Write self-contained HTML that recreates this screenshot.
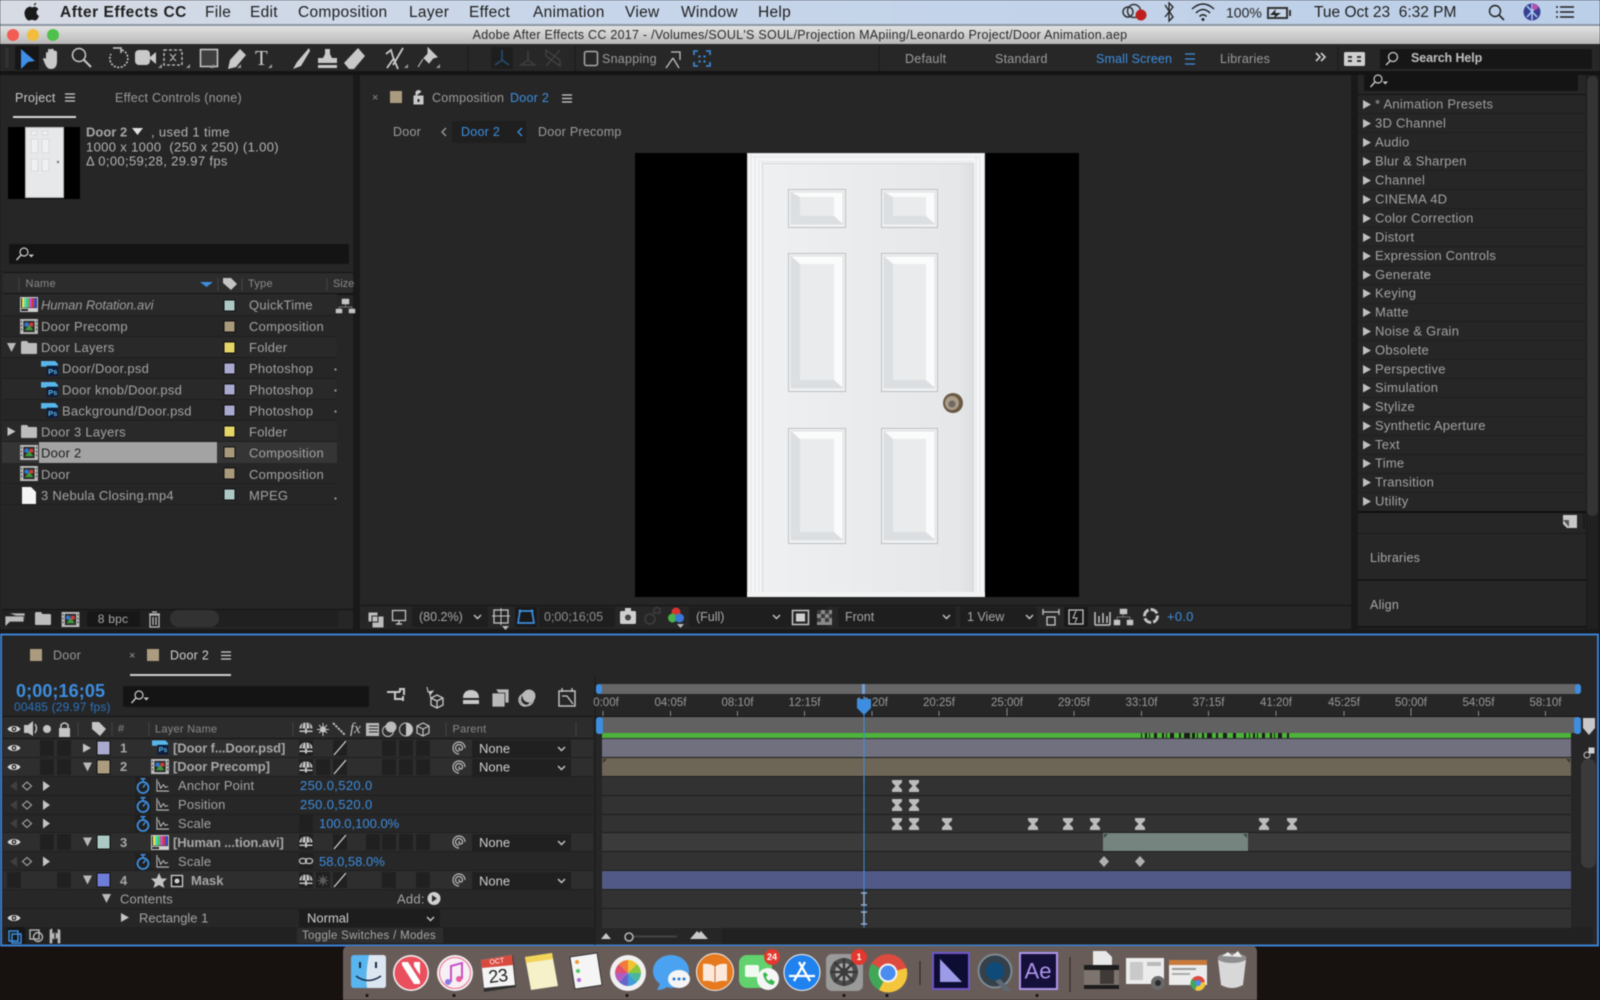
<!DOCTYPE html>
<html lang="en"><head><meta charset="utf-8"><title>After Effects CC</title>
<style>
html,body{margin:0;padding:0;width:1600px;height:1000px;overflow:hidden;background:#15100e}
svg{display:block;position:absolute;left:0;top:0;filter:blur(.5px)}
text{font-family:"Liberation Sans",sans-serif;font-size:13px;fill:#a4a4a4;dominant-baseline:central;letter-spacing:.25px;white-space:pre}
.m{font-size:15.5px;fill:#1e1e1e;letter-spacing:.3px}
.b{font-weight:bold}
.w{fill:#1f2022}
.u{fill:#3d8ee0}
.d{fill:#8f8f8f}
.h{font-size:11px;fill:#8a8a8a}
.l{fill:#b4b4b4;font-weight:bold;letter-spacing:0}
.n{fill:#cfcfcf}
.g{fill:#c4c4c4}
.i{fill:#c9c9c9}
.s{stroke:#c9c9c9;fill:none;stroke-width:1.4}
.t{font-size:11.5px;fill:#9a9a9a;text-anchor:middle;letter-spacing:0}
</style></head>
<body>
<svg width="1600" height="1000" viewBox="0 0 1600 1000" xmlns="http://www.w3.org/2000/svg">
<defs>
<linearGradient id="mb" x1="0" x2="1"><stop offset="0" stop-color="#d7dbe4"/><stop offset=".35" stop-color="#c8d6ea"/><stop offset="1" stop-color="#bccfe8"/></linearGradient>
<linearGradient id="tb" x1="0" y1="0" x2="0" y2="1"><stop offset="0" stop-color="#e2e2e2"/><stop offset="1" stop-color="#b9b9b9"/></linearGradient>
<linearGradient id="dr" x1="0" x2="1"><stop offset="0" stop-color="#eef0f1"/><stop offset=".5" stop-color="#e9ebec"/><stop offset=".93" stop-color="#e5e7e9"/><stop offset="1" stop-color="#dcdfe1"/></linearGradient>
<symbol id="eye" viewBox="0 0 14 10" overflow="visible"><path d="M0.5 5C3 1 11 1 13.5 5C11 9 3 9 .5 5Z" fill="#d5d5d5"/><circle cx="7" cy="5" r="2.4" fill="#262626"/><circle cx="7" cy="5" r="1.1" fill="#d5d5d5"/></symbol>
<symbol id="comp" viewBox="0 0 19 16" overflow="visible"><rect width="19" height="16" fill="#bdbdbd"/><rect x="3.5" y="2" width="12" height="12" fill="#2a2a2a"/><path d="M5 12L10 6L14 12Z" fill="#3c9a3a"/><circle cx="7" cy="6" r="2.4" fill="#2f77d5"/><rect x="10" y="4" width="4" height="4" fill="#d23c34"/><path d="M1 2h1v2H1zM1 6h1v2H1zM1 10h1v2H1zM17 2h1v2h-1zM17 6h1v2h-1zM17 10h1v2h-1z" fill="#333"/></symbol>
<symbol id="ps" viewBox="0 0 18 16" overflow="visible"><path d="M0 0H15L18 3V6H0Z" fill="#58b7ea"/><rect x="6" y="5" width="12" height="11" fill="#0e1c3a"/><text x="7.5" y="11" style="font-size:8px;fill:#58b7ea;font-weight:bold;letter-spacing:0">Ps</text></symbol>
<symbol id="tv" viewBox="0 0 18 15" overflow="visible"><rect width="18" height="15" fill="#d0d0d0"/><rect x="1" y="1" width="16" height="10" fill="#222"/><rect x="2" y="1" width="2.4" height="9.5" fill="#e8e84a"/><rect x="4.4" y="1" width="2.4" height="9.5" fill="#4ad8d8"/><rect x="6.8" y="1" width="2.4" height="9.5" fill="#4ad04a"/><rect x="9.2" y="1" width="2.4" height="9.5" fill="#d84ad8"/><rect x="11.6" y="1" width="2.4" height="9.5" fill="#d83a3a"/><rect x="14" y="1" width="2.4" height="9.5" fill="#3a4ad8"/><rect x="1" y="12" width="7" height="2" fill="#222"/></symbol>
<symbol id="folder" viewBox="0 0 16 13" overflow="visible"><path d="M0 1.5Q0 0 1.5 0H6L7.5 2H15Q16 2 16 3V12Q16 13 15 13H1Q0 13 0 12Z" fill="#bdbdbd"/></symbol>
<symbol id="shy" viewBox="0 0 14 12" overflow="visible"><path d="M.5 6.5C.5 2.5 3.5 .5 7 .5S13.5 2.5 13.5 6.5H8V8.5H13.5V10H8V11.5H6V10H.5V8.5H6V6.5Z" fill="#c4c4c4"/><path d="M7 .5V6.5M4 1.5Q3 4 3 6.500M10 1.5Q11 4 11 6.500" stroke="#2a2a2a" stroke-width=".9" fill="none"/></symbol>
<symbol id="sp" viewBox="0 0 14 14" overflow="visible"><path d="M7 13A6 6 0 1 1 13 7M7 10.500A3.500 3.500 0 1 1 10.500 7C10.500 8.500 9.500 9 8.500 9C7.500 9 7 8.300 7 7.500C7 6.800 7.400 6.500 7.800 6.500" fill="none" stroke="#bdbdbd" stroke-width="1.200"/></symbol>
<symbol id="sw" viewBox="0 0 14 16" overflow="visible"><circle cx="7" cy="9.500" r="5.500" fill="none" stroke="#3d8ee0" stroke-width="1.800"/><path d="M7 9.500L9.500 6M4.500 .8H9.500M7 .8V3.500" stroke="#3d8ee0" stroke-width="1.500" fill="none"/></symbol>
<symbol id="gr" viewBox="0 0 14 14" overflow="visible"><path d="M1 0V13H14" fill="none" stroke="#bdbdbd" stroke-width="1.100"/><path d="M2.500 3L5 10L8 6L10 9L13 8" fill="none" stroke="#bdbdbd" stroke-width="1.100"/></symbol>
<symbol id="hg" viewBox="0 0 10 12" overflow="visible"><path d="M0 0H10V2.500L6.500 6L10 9.500V12H0V9.500L3.500 6L0 2.500Z" fill="#bcbcbc"/></symbol>
<symbol id="chev" viewBox="0 0 9 6" overflow="visible"><path d="M1 1L4.500 4.500L8 1" fill="none" stroke="#c8c8c8" stroke-width="1.400"/></symbol>
<symbol id="sr" viewBox="0 0 20 14" overflow="visible"><circle cx="9" cy="5" r="4" fill="none" stroke="#c9c9c9" stroke-width="1.200"/><path d="M6 8L1.500 13" stroke="#c9c9c9" stroke-width="1.400"/><path d="M13.500 7.500H19L16.250 10.500Z" fill="#c9c9c9"/></symbol>
<symbol id="rarr" viewBox="0 0 8 9" overflow="visible"><path d="M0 0L8 4.500L0 9Z" fill="#c4c4c4"/></symbol>
<symbol id="darr" viewBox="0 0 9 9" overflow="visible"><path d="M0 0H9L4.500 9Z" fill="#b9b9b9"/></symbol>
<symbol id="menu" viewBox="0 0 10 9" overflow="visible"><path d="M0 1H10M0 4.500H10M0 8H10" stroke="#cfcfcf" stroke-width="1.300"/></symbol>
<symbol id="kn" viewBox="0 0 40 12" overflow="visible"><path d="M0 6L7 1V11Z" fill="#3f3f3f"/><path d="M17 2L21.500 6L17 10L12.500 6Z" fill="none" stroke="#a8a8a8" stroke-width="1.100"/><path d="M33 1L40 6L33 11Z" fill="#c4c4c4"/></symbol>
</defs>

<!-- desktop -->
<rect width="1600" height="1000" fill="#17110f"/>
<!-- menu bar -->
<rect width="1600" height="24" fill="url(#mb)"/>
<rect y="24" width="1600" height="2" fill="#8d97a6"/>
<path d="M36 2.800C34.800 3 33.800 4.200 34 5.500C35.300 5.500 36.200 4.200 36 2.800ZM30.500 6.600C27.500 6.600 24.500 9.500 24.500 13.200C24.500 16.500 27 20.500 29 20.500C30 20.500 30.700 19.800 32 19.800C33.300 19.800 33.900 20.500 35 20.500C36.800 20.500 38.500 17.800 38.900 15.900C37.300 15.200 36.500 13.900 36.500 12.500C36.500 11 37.300 9.900 38.400 9.200C37.400 7.600 35.900 6.800 34.500 6.800C33.300 6.800 32.600 7.500 31.900 7.500C31.400 7.500 31.300 6.600 30.500 6.600Z" fill="#1a1a1a"/>
<text class="m b" x="60" y="12.500" style="letter-spacing:.5px">After Effects CC</text>
<text class="m" x="205" y="12.500">File</text>
<text class="m" x="250" y="12.500">Edit</text>
<text class="m" x="298" y="12.500">Composition</text>
<text class="m" x="409" y="12.500">Layer</text>
<text class="m" x="469" y="12.500">Effect</text>
<text class="m" x="533" y="12.500">Animation</text>
<text class="m" x="625" y="12.500">View</text>
<text class="m" x="681" y="12.500">Window</text>
<text class="m" x="758" y="12.500">Help</text>
<!-- status -->
<circle cx="1134" cy="11" r="6.500" fill="none" stroke="#333" stroke-width="1.500"/><circle cx="1128" cy="12" r="5" fill="none" stroke="#333" stroke-width="1.500"/><circle cx="1141" cy="15" r="5.500" fill="#c01f1f"/>
<path d="M1165 5L1173 17L1169 21V3L1173 7L1165 17" fill="none" stroke="#222" stroke-width="1.300"/>
<path d="M1192 9Q1203 -1 1214 9M1196 13Q1203 6 1210 13M1199.500 16.500Q1203 13 1206.500 16.500" fill="none" stroke="#222" stroke-width="1.500"/><circle cx="1203" cy="19.500" r="1.500" fill="#222"/>
<text x="1226" y="12.500" style="font-size:14px;fill:#222;letter-spacing:0">100%</text>
<rect x="1267" y="7" width="21" height="12" fill="#333"/><rect x="1269" y="9" width="17" height="8" fill="#c8d6ea"/><path d="M1270 15L1276 9L1275 13H1281L1274 18L1275 15Z" fill="#222"/><rect x="1289" y="10" width="2" height="6" fill="#333"/>
<text class="m" x="1314" y="12.500" style="letter-spacing:0">Tue Oct 23  6:32 PM</text>
<circle cx="1495" cy="11" r="5.500" fill="none" stroke="#222" stroke-width="1.400"/><path d="M1499 15L1504 20" stroke="#222" stroke-width="1.600"/>
<circle cx="1532" cy="12" r="8.500" fill="#3a3f92"/><path d="M1527 6L1537 17M1537 6L1527 17M1532 4V20" stroke="#a9d0f5" stroke-width="1.500"/><circle cx="1535" cy="7" r="3" fill="#c04cb0"/>
<path d="M1560 7H1574M1560 12H1574M1560 17H1574" stroke="#222" stroke-width="1.500"/><circle cx="1557" cy="7" r="1" fill="#222"/><circle cx="1557" cy="12" r="1" fill="#222"/><circle cx="1557" cy="17" r="1" fill="#222"/>

<!-- title bar -->
<rect y="26" width="1600" height="18" fill="url(#tb)"/>
<circle cx="13" cy="35" r="6" fill="#f25c52"/><circle cx="33" cy="35" r="6" fill="#f2bd3d"/><circle cx="53" cy="35" r="6" fill="#4fc04b"/>
<text x="800" y="35" style="font-size:12.500px;fill:#2a2a2a;text-anchor:middle;letter-spacing:.26px">Adobe After Effects CC 2017 - /Volumes/SOUL'S SOUL/Projection MApiing/Leonardo Project/Door Animation.aep</text>

<!-- toolbar -->
<rect y="44" width="1600" height="27" fill="#272727"/>
<rect y="71" width="1600" height="4" fill="#141414"/>
<path d="M7 48V68" stroke="#3b3b3b" stroke-width="3" stroke-dasharray="1.500 1"/>
<rect x="15" y="46" width="24" height="24" rx="2" fill="#161616"/>
<path d="M21 49L35 61L28 62L21 69Z" fill="#3f8ee8"/>
<path d="M46 58V53Q47 51 48 53V58V49.500Q50 48 51 50V57V49Q53 48 54 50V57V51Q56 50 57 52V61Q57 69 51 69Q47 69 45 64L43 59Q44 57 46 59Z" fill="#c9c9c9"/>
<circle cx="79" cy="55" r="6.500" fill="none" stroke="#c9c9c9" stroke-width="1.500"/><path d="M84 60L91 67" stroke="#c9c9c9" stroke-width="2"/>
<path d="M122 50A9 9 0 1 1 111 54" fill="none" stroke="#c9c9c9" stroke-width="1.600" stroke-dasharray="2 1.500"/><path d="M113 48H121V53" fill="none" stroke="#c9c9c9" stroke-width="1.500"/>
<rect x="135" y="50" width="15" height="15" rx="4" fill="#c9c9c9"/><path d="M150 57L156 52V64L150 59Z" fill="#c9c9c9"/>
<rect x="164" y="50" width="18" height="15" fill="none" stroke="#c9c9c9" stroke-dasharray="3 2" stroke-width="1.300"/><path d="M170 54L173 57L176 54M170 61L173 58L176 61" fill="none" stroke="#c9c9c9"/>
<rect x="200.500" y="49.500" width="17" height="17" fill="#3f3f3f" stroke="#c9c9c9" stroke-width="1.500"/>
<path d="M240 49L246 55L236 67L228 69L230 60Z" fill="#c9c9c9"/>
<text x="255" y="58" style="font-family:'Liberation Serif',serif;font-size:21px;fill:#c9c9c9;letter-spacing:0">T</text>
<path d="M309 48L297 62L293 69L301 66L310 51Z" fill="#c9c9c9"/>
<path d="M325 49h5v5l2 4h5v5h-19v-5h5l2-4zM318 65h19v3h-19z" fill="#c9c9c9"/>
<path d="M358 48L365 56L354 69H349L344 63Z" fill="#c9c9c9"/>
<path d="M386 54L391 50L393 57L398 69M394 58L387 68M403 48L393 65" fill="none" stroke="#c9c9c9" stroke-width="1.800"/>
<path d="M428 48L437 57L433 58L429 63L424 58L428 54ZM423 59L418 67" fill="#c9c9c9" stroke="#c9c9c9"/>
<path d="M210 68h4v-4zM237 68h4v-4zM268 68h4v-4zM158 68h4v-4zM186 68h4v-4zM404 68h4v-4zM436 68h4v-4z" fill="#999"/>
<path d="M468 46V71" stroke="#1a1a1a"/>
<rect x="491" y="47" width="22" height="22" rx="2" fill="#1e1e1e"/>
<path d="M502 50V60L495 65M502 60L509 65" fill="none" stroke="#264767" stroke-width="1.800"/>
<path d="M528 51V60L521 65H535L528 60" fill="none" stroke="#424242" stroke-width="1.300"/>
<path d="M546 50L560 60V66L546 56ZM546 56V50M560 50L546 66" fill="none" stroke="#424242" stroke-width="1.300"/>
<path d="M575 46V71" stroke="#1a1a1a"/>
<rect x="584.500" y="51.500" width="13" height="14" rx="2" fill="none" stroke="#a8a8a8" stroke-width="1.500"/>
<text x="602" y="59" style="font-size:12.500px;fill:#9c9c9c">Snapping</text>
<path d="M666 68L673 58M679 68L673 58M671 52H680V60" fill="none" stroke="#c0c0c0" stroke-width="1.300"/>
<path d="M694 55V51H698M706 51H710V55M694 62V66H698M706 66H710V62" fill="none" stroke="#3d8ee0" stroke-width="1.600"/><path d="M699 56h1v1h-1zM704 56h1v1h-1zM699 61h1v1h-1zM704 61h1v1h-1z" fill="#3d8ee0" stroke="#3d8ee0"/>
<path d="M879 46V71M1338 46V71" stroke="#1a1a1a"/>
<text class="d" x="905" y="59" style="font-size:12.500px;fill:#9c9c9c">Default</text>
<text x="995" y="59" style="font-size:12.500px;fill:#9c9c9c">Standard</text>
<text x="1096" y="59" style="font-size:12.500px;fill:#3d8ee0;letter-spacing:.15px">Small Screen</text>
<path d="M1185 54H1195M1185 59H1195M1185 64H1195" stroke="#3d8ee0" stroke-width="1.300"/>
<text x="1220" y="59" style="font-size:12.500px;fill:#9c9c9c">Libraries</text>
<path d="M1316 53L1320 57L1316 61M1321 53L1325 57L1321 61" fill="none" stroke="#d0d0d0" stroke-width="1.600"/>
<rect x="1344" y="52" width="21" height="14" rx="1.500" fill="#d0d0d0"/><path d="M1348 56h4v2h-4zM1348 60h4v2h-4zM1357 56h4v2h-4zM1357 60h4v2h-4z" fill="#333"/>
<rect x="1380" y="49" width="212" height="20" rx="2" fill="#161616"/>
<circle cx="1393" cy="57" r="4.500" fill="none" stroke="#c9c9c9" stroke-width="1.300"/><path d="M1390 61L1386 65" stroke="#c9c9c9" stroke-width="1.400"/>
<text x="1411" y="58" style="font-size:12.500px;fill:#c0c0c0;font-weight:bold;letter-spacing:-.1px">Search Help</text>

<!-- panel backdrop -->
<rect y="75" width="1600" height="559" fill="#191919"/>
<rect x="0" y="75" width="353" height="554" fill="#262626"/>
<rect x="360" y="75" width="991" height="554" fill="#262626"/>
<rect x="1358" y="75" width="228" height="554" fill="#262626"/>
<rect x="1587" y="75" width="11" height="554" fill="#202020"/>

<!-- project panel -->
<text x="15" y="98" style="fill:#c9c9c9;font-size:12.500px">Project</text>
<use href="#menu" x="65" y="93" width="10" height="9"/>
<rect x="13" y="116" width="63" height="2" fill="#d8d8d8"/>
<text x="115" y="98" style="fill:#9a9a9a;font-size:12.500px">Effect Controls (none)</text>
<rect x="8" y="127" width="72" height="72" fill="#000"/>
<rect x="25" y="127" width="39" height="71" fill="#e6e8ea"/>
<rect x="25.500" y="127.500" width="38" height="70" fill="none" stroke="#bbb"/>
<path d="M31 131h6v4h-6zM42 131h6v4h-6zM31 139h7v14h-7zM42 139h7v14h-7zM31 159h7v12h-7zM42 159h7v12h-7z" fill="#eef0f1" stroke="#d3d6d8" stroke-width=".8"/>
<circle cx="58" cy="162" r="1.200" fill="#777"/>
<text class="l" x="86" y="132" style="font-weight:bold;fill:#a8a8a8">Door 2</text>
<path d="M132 128H143L137.500 135Z" fill="#e0e0e0"/>
<text x="147" y="132" style="fill:#b4b4b4;letter-spacing:.35px"> , used 1 time</text>
<text x="86" y="147" style="fill:#b4b4b4;letter-spacing:.35px">1000 x 1000  (250 x 250) (1.00)</text>
<text x="86" y="161" style="fill:#b4b4b4;letter-spacing:.35px">Δ 0;00;59;28, 29.97 fps</text>
<rect x="9" y="244" width="340" height="20" rx="2" fill="#141414"/>
<use href="#sr" x="15" y="247" width="20" height="14"/>
<rect x="3" y="273" width="350" height="21" fill="#2c2c2c"/>
<rect x="3" y="272" width="350" height="1" fill="#141414"/>
<rect x="3" y="293" width="350" height="2" fill="#141414"/>
<path d="M19 278V291M218 278V291M242 278V291M327 278V291" stroke="#444"/>
<text class="h" x="25.500" y="284">Name</text>
<path d="M200 282H213L206.500 287Z" fill="#3d8ee0"/>
<path d="M223 278H231L237 284L231 290L223 283Z" fill="#c4c4c4"/>
<text class="h" x="248" y="284">Type</text>
<text class="h" x="333" y="284" style="letter-spacing:0">Size</text>
<!-- project rows -->
<rect x="2" y="294" width="335" height="21" fill="#292929"/>
<rect x="2" y="336" width="335" height="21" fill="#292929"/>
<rect x="2" y="378" width="335" height="21" fill="#292929"/>
<rect x="2" y="420" width="335" height="21" fill="#292929"/>
<path d="M2 315.500H337M2 336.500H337M2 357.500H337M2 378.500H337M2 399.500H337M2 420.500H337M2 441.500H337M2 462.500H337M2 483.500H337M2 504.500H337" stroke="#1f1f1f"/>
<rect x="2" y="442" width="335" height="21" fill="#353535"/>
<rect x="39" y="442" width="178" height="21" fill="#a3a3a3"/>
<use href="#tv" x="20" y="297" width="18" height="15"/>
<use href="#comp" x="20" y="319" width="18" height="15"/>
<use href="#darr" x="7" y="343" width="9" height="9"/>
<use href="#folder" x="21" y="341" width="16" height="13"/>
<use href="#ps" x="41" y="361" width="17" height="15"/>
<use href="#ps" x="41" y="382" width="17" height="15"/>
<use href="#ps" x="41" y="403" width="17" height="15"/>
<use href="#rarr" x="7" y="427" width="9" height="9"/>
<use href="#folder" x="21" y="425" width="16" height="13"/>
<use href="#comp" x="20" y="445" width="18" height="15"/>
<use href="#comp" x="20" y="466" width="18" height="15"/>
<path d="M22 487H31L36 492V504H22Z" fill="#f5f5f5"/>
<text x="41" y="305" style="font-style:italic;fill:#9e9e9e;letter-spacing:-.1px">Human Rotation.avi</text>
<text x="41" y="326.500">Door Precomp</text>
<text x="41" y="347.500">Door Layers</text>
<text x="62" y="368.500">Door/Door.psd</text>
<text x="62" y="390">Door knob/Door.psd</text>
<text x="62" y="411">Background/Door.psd</text>
<text x="41" y="432">Door 3 Layers</text>
<text x="41" y="453" style="fill:#1d1d1d">Door 2</text>
<text x="41" y="474.500">Door</text>
<text x="41" y="495.500">3 Nebula Closing.mp4</text>
<g stroke="#101010" stroke-width="1">
<rect x="224" y="300" width="11" height="11" fill="#acc9c6"/>
<rect x="224" y="321" width="11" height="11" fill="#a99a7c"/>
<rect x="224" y="342" width="11" height="11" fill="#e3d667"/>
<rect x="224" y="363" width="11" height="11" fill="#aaa9cf"/>
<rect x="224" y="384" width="11" height="11" fill="#aaa9cf"/>
<rect x="224" y="405" width="11" height="11" fill="#aaa9cf"/>
<rect x="224" y="426" width="11" height="11" fill="#e3d667"/>
<rect x="224" y="447" width="11" height="11" fill="#a99a7c"/>
<rect x="224" y="468" width="11" height="11" fill="#a99a7c"/>
<rect x="224" y="489" width="11" height="11" fill="#acc9c6"/>
</g>
<text x="249" y="305">QuickTime</text>
<text x="249" y="326.500">Composition</text>
<text x="249" y="347.500">Folder</text>
<text x="249" y="368.500">Photoshop</text>
<text x="249" y="390">Photoshop</text>
<text x="249" y="411">Photoshop</text>
<text x="249" y="432">Folder</text>
<text x="249" y="453">Composition</text>
<text x="249" y="474.500">Composition</text>
<text x="249" y="495.500">MPEG</text>
<path d="M342 299h7v5h-7zM345.500 304V307M339 307H352M339 307V309M352 307V309M336 309h6v4h-6zM349 309h6v4h-6z" fill="#c4c4c4" stroke="#c4c4c4" stroke-width=".5"/>
<path d="M335 369h1v1h-1zM335 390h1v1h-1zM335 411h1v1h-1zM335 498h1v1h-1z" fill="#999" stroke="#999"/>
<!-- project footer -->
<rect x="2" y="609" width="353" height="1" fill="#141414"/>
<rect x="2" y="610" width="336" height="17" fill="#202020"/>
<path d="M5 616H24V622H10L5 627ZM9 613H25V619" fill="#bbb" stroke="#262626" stroke-width=".8"/>
<use href="#folder" x="35" y="612" width="16" height="13"/>
<use href="#comp" x="61" y="612" width="19" height="15"/>
<rect x="87" y="611" width="53" height="16" rx="2" fill="#171717"/>
<text x="113" y="619" style="text-anchor:middle;font-size:12px;fill:#a8a8a8">8 bpc</text>
<path d="M149 614H160M152 612H157M150 615H159V627H150ZM153 617V625M156 617V625" fill="none" stroke="#bbb" stroke-width="1.300"/>
<rect x="170" y="610" width="49" height="17" rx="8.500" fill="#323232"/>

<!-- comp panel -->
<text x="372" y="98" style="font-size:11px;fill:#8f8f8f">×</text>
<rect x="390" y="91" width="12" height="12" fill="#ab9c7f"/>
<path d="M414 96H423V104H414ZM416 96V92Q418.500 89 421 92" fill="#c9c9c9" stroke="#c9c9c9" stroke-width="1"/><rect x="417.500" y="99" width="2" height="3" fill="#262626"/>
<text x="432" y="98" style="fill:#9c9c9c;font-size:12.500px">Composition</text>
<text x="510" y="98" style="fill:#3d8ee0;font-size:12.500px">Door 2</text>
<use href="#menu" x="562" y="94" width="10" height="9"/>
<text x="393" y="132" style="fill:#9c9c9c;font-size:12.500px">Door</text>
<path d="M446 128L442 132L446 136" fill="none" stroke="#9c9c9c" stroke-width="1.300"/>
<rect x="452" y="121" width="74" height="22" fill="#1f1f1f"/>
<text x="461" y="132" style="fill:#3d8ee0;font-size:12.500px">Door 2</text>
<path d="M522 128L518 132L522 136" fill="none" stroke="#3d8ee0" stroke-width="1.300"/>
<text x="538" y="132" style="fill:#9c9c9c;font-size:12.500px">Door Precomp</text>
<rect x="635" y="153" width="444" height="444" fill="#000"/>
<!-- door -->
<rect x="747" y="153" width="238" height="444" fill="#f5f6f7"/>
<path d="M751 153V597M755 156V597M759 159V597M980 159V597M976 156V597" stroke="#e0e2e4" stroke-width=".8"/>
<path d="M747.500 153V597M984.500 153V597" stroke="#cfd2d4"/>
<path d="M747 153.500H985M751 157H981M759 161.500H973" stroke="#dcdfe1" stroke-width=".8"/>
<rect x="763" y="164" width="210" height="428" fill="url(#dr)"/>
<rect x="762.500" y="163.500" width="211" height="429" fill="none" stroke="#d3d6d8"/>
<rect x="747" y="592" width="238" height="5" fill="#f2f3f4"/>
<g>
<rect x="788.500" y="189.500" width="57" height="38" fill="#f0f1f2" stroke="#bcc0c2"/><rect x="791" y="192" width="52" height="32" fill="#fafbfb" stroke="#cfd2d4" stroke-width=".6"/><path d="M791 192L800 197V216H834L843 224H791Z" fill="#dcdfe1"/><rect x="800" y="197" width="34" height="19" fill="#e9ebec"/>
<rect x="881.500" y="189.500" width="56" height="38" fill="#f0f1f2" stroke="#bcc0c2"/><rect x="884" y="192" width="51" height="32" fill="#fafbfb" stroke="#cfd2d4" stroke-width=".6"/><path d="M884 192L893 197V216H926L935 224H884Z" fill="#dcdfe1"/><rect x="893" y="197" width="33" height="19" fill="#e9ebec"/>
<rect x="788.500" y="253.500" width="57" height="138" fill="#f0f1f2" stroke="#bcc0c2"/><rect x="791" y="256" width="52" height="132" fill="#fafbfb" stroke="#cfd2d4" stroke-width=".6"/><path d="M791 256L800 264V380H834L843 388H791Z" fill="#dcdfe1"/><rect x="800" y="264" width="34" height="116" fill="#e9ebec"/>
<rect x="881.500" y="253.500" width="56" height="138" fill="#f0f1f2" stroke="#bcc0c2"/><rect x="884" y="256" width="51" height="132" fill="#fafbfb" stroke="#cfd2d4" stroke-width=".6"/><path d="M884 256L893 264V380H926L935 388H884Z" fill="#dcdfe1"/><rect x="893" y="264" width="33" height="116" fill="#e9ebec"/>
<rect x="788.500" y="428.500" width="57" height="115" fill="#f0f1f2" stroke="#bcc0c2"/><rect x="791" y="431" width="52" height="109" fill="#fafbfb" stroke="#cfd2d4" stroke-width=".6"/><path d="M791 431L800 439V532H834L843 540H791Z" fill="#dcdfe1"/><rect x="800" y="439" width="34" height="93" fill="#e9ebec"/>
<rect x="881.500" y="428.500" width="56" height="115" fill="#f0f1f2" stroke="#bcc0c2"/><rect x="884" y="431" width="51" height="109" fill="#fafbfb" stroke="#cfd2d4" stroke-width=".6"/><path d="M884 431L893 439V532H926L935 540H884Z" fill="#dcdfe1"/><rect x="893" y="439" width="33" height="93" fill="#e9ebec"/>
</g>
<circle cx="953" cy="403" r="10" fill="#6a5a44"/><circle cx="952" cy="403" r="7" fill="#a99c88"/><circle cx="952" cy="404" r="3.500" fill="#6e6a60"/>
<!-- comp footer -->
<rect x="360" y="605" width="991" height="1" fill="#141414"/>
<path d="M368 612H378V622H368ZM372 616H384V628H372Z" fill="#bdbdbd" stroke="#262626"/>
<rect x="392.500" y="610.500" width="13" height="10" fill="#262626" stroke="#c4c4c4" stroke-width="1.300"/><path d="M396 624H402M399 621V624" stroke="#c4c4c4" stroke-width="1.400"/>
<rect x="412" y="607" width="76" height="20" rx="2" fill="#1e1e1e"/>
<text x="419" y="617" style="font-size:12.500px;fill:#a8a8a8;letter-spacing:0">(80.2%)</text>
<use href="#chev" x="473" y="614" width="9" height="6"/>
<rect x="494" y="610" width="14" height="13" fill="none" stroke="#c4c4c4" stroke-width="1.300"/><path d="M501 608V625M492 616H510" stroke="#c4c4c4"/><path d="M502 626H509L505.500 630Z" fill="#bbb"/>
<rect x="515" y="607" width="22" height="20" rx="2" fill="#191919"/>
<path d="M520 611H532L534 623H518Z" fill="none" stroke="#3d8ee0" stroke-width="1.700"/><circle cx="520" cy="611" r="1.500" fill="#3d8ee0"/><circle cx="532" cy="611" r="1.500" fill="#3d8ee0"/>
<rect x="539" y="607" width="76" height="20" rx="2" fill="#1e1e1e"/>
<text x="544" y="617" style="font-size:12.500px;fill:#8f8f8f;letter-spacing:0">0;00;16;05</text>
<rect x="620" y="611" width="16" height="13" rx="1.500" fill="#cfcfcf"/><rect x="625" y="608" width="6" height="3" fill="#cfcfcf"/><circle cx="628" cy="617.500" r="3" fill="#444"/>
<circle cx="650" cy="619" r="5" fill="none" stroke="#3e3e3e" stroke-width="1.500"/><path d="M654 613V609Q657 606 660 609V613H653Z" fill="none" stroke="#3e3e3e" stroke-width="1.500"/>
<circle cx="676" cy="612" r="4.500" fill="#d8352f"/><circle cx="672.500" cy="618" r="4.500" fill="#48b24a"/><circle cx="679.500" cy="618" r="4.500" fill="#3a77d8"/><path d="M677 624H684L680.500 628Z" fill="#bbb"/>
<rect x="689" y="607" width="138" height="20" rx="2" fill="#1e1e1e"/>
<text x="696" y="617" style="font-size:12.500px;fill:#a8a8a8;letter-spacing:0">(Full)</text>
<use href="#chev" x="772" y="614" width="9" height="6"/>
<rect x="792.500" y="610.500" width="16" height="14" fill="#262626" stroke="#c4c4c4" stroke-width="1.500"/><rect x="796" y="613.500" width="9" height="8" fill="#d0d0d0"/>
<rect x="817" y="610" width="15" height="15" fill="#8a8a8a"/><path d="M817 610h4v4h-4zM825 610h4v4h-4zM821 614h4v4h-4zM829 614h3v4h-3zM817 618h4v4h-4zM825 618h4v4h-4z" fill="#3c3c3c"/>
<rect x="838" y="607" width="118" height="20" rx="2" fill="#1e1e1e"/>
<text x="845" y="617" style="font-size:12.500px;fill:#a8a8a8;letter-spacing:0">Front</text>
<use href="#chev" x="942" y="614" width="9" height="6"/>
<rect x="960" y="607" width="77" height="20" rx="2" fill="#1e1e1e"/>
<text x="967" y="617" style="font-size:12.500px;fill:#a8a8a8;letter-spacing:0">1 View</text>
<use href="#chev" x="1025" y="614" width="9" height="6"/>
<path d="M1043 612H1059M1043 609V615M1059 609V615" stroke="#c4c4c4" stroke-width="1.300" fill="none"/><rect x="1047" y="617" width="8" height="8" fill="none" stroke="#c4c4c4" stroke-width="1.300"/>
<rect x="1064" y="607" width="24" height="20" rx="2" fill="#191919"/><rect x="1069" y="610" width="14" height="14" fill="none" stroke="#c4c4c4" stroke-width="1.300"/><path d="M1076 611L1073 618H1077L1075 623" fill="none" stroke="#c4c4c4"/>
<path d="M1095 612V625M1110 612V625M1095 625H1110M1099 616V623M1103 613V623M1107 616V623" stroke="#c4c4c4" stroke-width="1.500" fill="none"/>
<path d="M1120 609h7v5h-7zM1123 614V617M1117 617H1130M1117 617V620M1130 617V620M1114 620h6v5h-6zM1127 620h6v5h-6z" fill="#c4c4c4" stroke="#c4c4c4" stroke-width=".5"/>
<circle cx="1151" cy="616" r="6.500" fill="none" stroke="#c4c4c4" stroke-width="3" stroke-dasharray="8 2"/>
<text x="1167" y="616.500" style="fill:#3d8ee0;font-size:13px">+0.0</text>

<!-- effects panel -->
<rect x="1364" y="75" width="214" height="16" rx="2" fill="#141414"/>
<use href="#sr" x="1369" y="74" width="20" height="14"/>
<rect x="1358" y="94" width="228" height="1" fill="#141414"/>
<g stroke="#202020"><path d="M1358 113.500H1585M1358 132.500H1585M1358 151.500H1585M1358 170.500H1585M1358 189.500H1585M1358 208.500H1585M1358 227.500H1585M1358 246.500H1585M1358 265.500H1585M1358 284.500H1585M1358 303.500H1585M1358 321.500H1585M1358 340.500H1585M1358 359.500H1585M1358 378.500H1585M1358 397.500H1585M1358 416.500H1585M1358 435.500H1585M1358 454.500H1585M1358 473.500H1585M1358 492.500H1585"/></g>
<g>
<path d="M1363 100L1371 104.500L1363 109ZM1363 119L1371 123.500L1363 128ZM1363 138L1371 142.500L1363 147ZM1363 157L1371 161.500L1363 166ZM1363 176L1371 180.500L1363 185ZM1363 195L1371 199.500L1363 204ZM1363 214L1371 218.500L1363 223ZM1363 233L1371 237.500L1363 242ZM1363 251.500L1371 256L1363 260.500ZM1363 270.500L1371 275L1363 279.500ZM1363 289L1371 293.500L1363 298ZM1363 308L1371 312.500L1363 317ZM1363 327L1371 331.500L1363 336ZM1363 346L1371 350.500L1363 355ZM1363 365L1371 369.500L1363 374ZM1363 383.500L1371 388L1363 392.500ZM1363 402.500L1371 407L1363 411.500ZM1363 421.500L1371 426L1363 430.500ZM1363 440.500L1371 445L1363 449.500ZM1363 459L1371 463.500L1363 468ZM1363 478L1371 482.500L1363 487ZM1363 497L1371 501.500L1363 506Z" fill="#c0c0c0"/>
</g>
<text x="1375" y="104" style="fill:#a0a0a0">* Animation Presets</text>
<text x="1375" y="123">3D Channel</text>
<text x="1375" y="142">Audio</text>
<text x="1375" y="161">Blur &amp; Sharpen</text>
<text x="1375" y="180">Channel</text>
<text x="1375" y="199">CINEMA 4D</text>
<text x="1375" y="218">Color Correction</text>
<text x="1375" y="237">Distort</text>
<text x="1375" y="255.500">Expression Controls</text>
<text x="1375" y="274.500">Generate</text>
<text x="1375" y="293">Keying</text>
<text x="1375" y="312">Matte</text>
<text x="1375" y="331">Noise &amp; Grain</text>
<text x="1375" y="350">Obsolete</text>
<text x="1375" y="369">Perspective</text>
<text x="1375" y="387.500">Simulation</text>
<text x="1375" y="406.500">Stylize</text>
<text x="1375" y="425.500">Synthetic Aperture</text>
<text x="1375" y="444.500">Text</text>
<text x="1375" y="463">Time</text>
<text x="1375" y="482">Transition</text>
<text x="1375" y="501">Utility</text>
<rect x="1587" y="76" width="11" height="440" rx="5.500" fill="#343434"/>
<rect x="1358" y="511" width="228" height="2" fill="#101010"/>
<path d="M1563 515H1577V528H1567L1563 524Z" fill="#c8c8c8"/><path d="M1563 520H1569V527Z" fill="#555"/>
<path d="M1584 513V529" stroke="#101010"/>
<rect x="1358" y="533" width="228" height="1" fill="#1a1a1a"/>
<text x="1370" y="558" style="font-size:12.500px;fill:#a8a8a8">Libraries</text>
<rect x="1358" y="579" width="228" height="2" fill="#161616"/>
<text x="1370" y="605" style="font-size:12.500px;fill:#a8a8a8">Align</text>
<rect x="1358" y="626" width="228" height="2" fill="#161616"/>

<!-- timeline panel -->
<rect x="1" y="634.500" width="1597" height="311" fill="#262626" stroke="#3a7fd0" stroke-width="2"/>
<rect x="30" y="649" width="12" height="12" fill="#ab9c7f"/>
<text x="53" y="655.500" style="fill:#9a9a9a;font-size:12.500px">Door</text>
<text x="129" y="656" style="fill:#9a9a9a;font-size:11px">×</text>
<rect x="147" y="649" width="12" height="12" fill="#ab9c7f"/>
<text x="170" y="655.500" style="fill:#d0d0d0;font-size:12.500px">Door 2</text>
<use href="#menu" x="221" y="651" width="10" height="9"/>
<rect x="130" y="674" width="101" height="2" fill="#cfcfcf"/>
<text x="16" y="691" style="fill:#3d8ee0;font-size:18px;font-weight:bold;letter-spacing:.1px">0;00;16;05</text>
<text x="14" y="707" style="fill:#2b72bd;font-size:12px;letter-spacing:.15px">00485 (29.97 fps)</text>
<rect x="123" y="686" width="246" height="21" rx="2" fill="#141414"/>
<use href="#sr" x="130" y="690" width="20" height="14"/>
<path d="M387 692H400M395 692V699H403M403 696V701M400 692V689H404V695" fill="none" stroke="#c9c9c9" stroke-width="2"/>
<path d="M427 687L428 692L433 691L430 695L431 699" fill="#c9c9c9" stroke="#c9c9c9"/><path d="M437 695L443 698V705L437 708L431 705V698Z M431 698L437 701L443 698M437 701V708" fill="none" stroke="#c9c9c9" stroke-width="1.300"/>
<path d="M463 698C463 692 467 690 471 690S479 692 479 698ZM463 700H479V704H463Z" fill="#c9c9c9"/>
<path d="M492 693H505V707H492ZM496 689H509V703H505" fill="#b9b9b9" stroke="#262626" stroke-width=".8"/>
<circle cx="529" cy="696" r="6.500" fill="#b9b9b9"/><circle cx="527" cy="699" r="6.500" fill="none" stroke="#b9b9b9" stroke-width="1.400"/><circle cx="525" cy="700" r="6" fill="none" stroke="#b9b9b9" stroke-width="1.400"/>
<rect x="559" y="691" width="16" height="15" fill="none" stroke="#c9c9c9" stroke-width="1.400"/><path d="M562 688V692M572 688V692M562 696L567 696L573 704" fill="none" stroke="#c9c9c9" stroke-width="1.300"/>
<path d="M595 676V945" stroke="#1a1a1a"/>

<!-- header -->
<rect x="3" y="717" width="590" height="21" fill="#2c2c2c"/>
<rect x="3" y="716" width="590" height="1" fill="#141414"/>
<rect x="3" y="738" width="590" height="1" fill="#141414"/>
<use href="#eye" x="7" y="724" width="14" height="10"/>
<path d="M24 725H28L33 721V736L28 733H24Z" fill="#c4c4c4"/><path d="M35 724Q38 728 35 733" fill="none" stroke="#c4c4c4" stroke-width="1.400"/>
<circle cx="47" cy="729" r="4" fill="#c4c4c4"/>
<rect x="59" y="728" width="11" height="9" fill="#c4c4c4"/><path d="M61 728V725Q64.500 721 68 725V728" fill="none" stroke="#c4c4c4" stroke-width="1.500"/>
<path d="M92 722H99L106 729L100 736L92 729Z" fill="#c4c4c4"/>
<path d="M78 722V736M112 722V736M149 722V736M293 722V736M446 722V736M576 722V736" stroke="#444"/>
<text class="h" x="118" y="729">#</text>
<text class="h" x="155" y="729.500">Layer Name</text>
<use href="#shy" x="299" y="722" width="14" height="12"/>
<path d="M323 723V736M317 729.500H329M319 725L327 733M327 725L319 733" stroke="#c4c4c4"/>
<circle cx="323" cy="729.500" r="3" fill="#c4c4c4"/>
<path d="M333 723L345 735" stroke="#c4c4c4" stroke-width="1.800" stroke-dasharray="2.500 1"/>
<text x="350" y="729" style="font-family:'Liberation Serif',serif;font-style:italic;font-size:15px;fill:#c4c4c4;letter-spacing:0">fx</text>
<rect x="366" y="723" width="13" height="13" fill="#b9b9b9"/><path d="M369 726H378M369 729H378M369 732H378" stroke="#2a2a2a"/>
<circle cx="391" cy="727" r="5.500" fill="#b9b9b9"/><circle cx="388" cy="731" r="5.500" fill="none" stroke="#c4c4c4"/>
<circle cx="406" cy="729.500" r="6.500" fill="#c4c4c4"/><path d="M406 723A6.500 6.500 0 0 0 406 736Z" fill="#2a2a2a"/><circle cx="406" cy="729.500" r="6.500" fill="none" stroke="#c4c4c4"/>
<path d="M423 723L429 726V733L423 736L417 733V726ZM417 726L423 729L429 726M423 729V736" fill="none" stroke="#c4c4c4" stroke-width="1.200"/>
<text class="h" x="452.500" y="729.500">Parent</text>

<!-- rows left -->
<rect x="3" y="739" width="590" height="18.400" fill="#2e2e2e"/>
<rect x="3" y="758" width="590" height="18.400" fill="#2e2e2e"/>
<rect x="3" y="777" width="590" height="18.400" fill="#272727"/>
<rect x="3" y="796" width="590" height="18.400" fill="#272727"/>
<rect x="3" y="815" width="590" height="18.400" fill="#272727"/>
<rect x="3" y="833" width="590" height="18.400" fill="#2e2e2e"/>
<rect x="3" y="852" width="590" height="18.400" fill="#272727"/>
<rect x="3" y="871" width="590" height="18.400" fill="#2e2e2e"/>
<rect x="3" y="890" width="590" height="18.400" fill="#272727"/>
<rect x="3" y="909" width="590" height="18.400" fill="#272727"/>
<!-- cells -->
<g fill="#202020">
<rect x="40" y="740" width="14" height="16"/><rect x="57" y="740" width="14" height="16"/><rect x="40" y="759" width="14" height="16"/><rect x="57" y="759" width="14" height="16"/><rect x="40" y="834" width="14" height="16"/><rect x="57" y="834" width="14" height="16"/><rect x="7" y="872" width="14" height="16"/><rect x="57" y="872" width="14" height="16"/>
<rect x="382" y="740" width="14" height="16"/><rect x="399" y="740" width="14" height="16"/><rect x="416" y="740" width="14" height="16"/><rect x="382" y="759" width="14" height="16"/><rect x="399" y="759" width="14" height="16"/><rect x="416" y="759" width="14" height="16"/><rect x="366" y="834" width="14" height="16"/><rect x="382" y="834" width="14" height="16"/><rect x="399" y="834" width="14" height="16"/><rect x="416" y="834" width="14" height="16"/><rect x="382" y="872" width="14" height="16"/><rect x="416" y="872" width="14" height="16"/>
<rect x="299" y="740" width="14" height="16"/><rect x="316" y="759" width="14" height="16"/><rect x="299" y="759" width="14" height="16"/><rect x="333" y="740" width="14" height="16"/><rect x="333" y="759" width="14" height="16"/><rect x="299" y="834" width="14" height="16"/><rect x="333" y="834" width="14" height="16"/><rect x="299" y="872" width="14" height="16"/><rect x="316" y="872" width="14" height="16"/><rect x="333" y="872" width="14" height="16"/>
<rect x="299" y="815" width="14" height="17"/><rect x="299" y="853" width="14" height="16"/>
<rect x="135" y="777" width="16" height="17"/><rect x="135" y="796" width="16" height="17"/><rect x="135" y="815" width="16" height="17"/><rect x="135" y="853" width="16" height="17"/>
<rect x="472" y="740" width="99" height="17"/><rect x="472" y="759" width="99" height="17"/><rect x="472" y="834" width="99" height="17"/><rect x="472" y="872" width="99" height="17"/>
<rect x="299" y="909" width="141" height="18" fill="#1d1d1d"/>
</g>
<use href="#eye" x="7" y="743" width="14" height="10"/><use href="#eye" x="7" y="762" width="14" height="10"/><use href="#eye" x="7" y="837" width="14" height="10"/><use href="#eye" x="7" y="913" width="14" height="10"/>
<use href="#rarr" x="83" y="743.500" width="8" height="9"/>
<use href="#darr" x="83" y="762.500" width="9" height="9"/><use href="#darr" x="83" y="837.500" width="9" height="9"/><use href="#darr" x="83" y="875.500" width="9" height="9"/><use href="#darr" x="102" y="894" width="9" height="9"/><use href="#rarr" x="121" y="913" width="8" height="9"/>
<g stroke="#111"><rect x="97" y="741" width="13" height="14" fill="#aaa9cf"/><rect x="97" y="760" width="13" height="14" fill="#ab9c7f"/><rect x="97" y="835" width="13" height="14" fill="#acc9c6"/><rect x="97" y="873" width="13" height="14" fill="#6d7cd6"/></g>
<text x="120" y="748" style="fill:#a8a8a8;font-weight:bold">1</text>
<text x="120" y="766.500" style="fill:#a8a8a8;font-weight:bold">2</text>
<text x="120" y="842.500" style="fill:#a8a8a8;font-weight:bold">3</text>
<text x="120" y="880.500" style="fill:#a8a8a8;font-weight:bold">4</text>
<use href="#ps" x="152" y="740" width="16" height="15"/><use href="#comp" x="151" y="759" width="18" height="15"/><use href="#tv" x="151" y="835" width="18" height="15"/>
<text class="l" x="173" y="748" style="fill:#a8a8a8;letter-spacing:-.1px">[Door f...Door.psd]</text>
<text class="l" x="173" y="766.500" style="fill:#a8a8a8;letter-spacing:-.1px">[Door Precomp]</text>
<text class="l" x="173" y="842.500" style="fill:#a8a8a8;letter-spacing:-.1px">[Human ...tion.avi]</text>
<path d="M159 873L161.500 878.500H167L163 882.500L164.500 888L159 885L153.500 888L155 882.500L151 878.500H156.500Z" fill="#c4c4c4"/>
<rect x="171.500" y="875.500" width="11" height="11" fill="#1a1a1a" stroke="#d0d0d0" stroke-width="1.300"/><circle cx="177" cy="881" r="2.500" fill="#d0d0d0"/>
<text class="l" x="191" y="880.500" style="fill:#a8a8a8">Mask</text>
<use href="#kn" x="10" y="780" width="40" height="12"/><use href="#kn" x="10" y="799" width="40" height="12"/><use href="#kn" x="10" y="817.500" width="40" height="12"/><use href="#kn" x="10" y="855.500" width="40" height="12"/>
<use href="#sw" x="136" y="778" width="14" height="16"/><use href="#sw" x="136" y="797" width="14" height="16"/><use href="#sw" x="136" y="816" width="14" height="16"/><use href="#sw" x="136" y="854" width="14" height="16"/>
<use href="#gr" x="156" y="779" width="13" height="13"/><use href="#gr" x="156" y="798" width="13" height="13"/><use href="#gr" x="156" y="817" width="13" height="13"/><use href="#gr" x="156" y="855" width="13" height="13"/>
<text x="178" y="785.500" style="letter-spacing:.15px">Anchor Point</text>
<text x="178" y="804.500" style="letter-spacing:.15px">Position</text>
<text x="178" y="823.500" style="letter-spacing:.15px">Scale</text>
<text x="178" y="861.500" style="letter-spacing:.15px">Scale</text>
<text class="u" x="300" y="785.500" style="letter-spacing:.35px">250.0,520.0</text>
<text class="u" x="300" y="804.500" style="letter-spacing:.35px">250.0,520.0</text>
<text class="u" x="319" y="823.500" style="letter-spacing:0">100.0,100.0%</text>
<text class="u" x="319" y="861.500" style="letter-spacing:0">58.0,58.0%</text>
<rect x="299.500" y="858.500" width="7" height="5" rx="2.500" fill="none" stroke="#c4c4c4" stroke-width="1.300"/><rect x="305.500" y="858.500" width="7" height="5" rx="2.500" fill="none" stroke="#c4c4c4" stroke-width="1.300"/>
<use href="#shy" x="299" y="742" width="14" height="12"/><use href="#shy" x="299" y="761" width="14" height="12"/><use href="#shy" x="299" y="836" width="14" height="12"/><use href="#shy" x="299" y="874" width="14" height="12"/>
<circle cx="323" cy="880.500" r="3" fill="#5a5a5a"/><path d="M323 875V886M317.500 880.500H328.500M319 876.500L327 884.500M327 876.500L319 884.500" stroke="#5a5a5a"/>
<path d="M334 755L346 741M334 774L346 760M334 849L346 835M334 887L346 873" stroke="#cfcfcf" stroke-width="1.300"/>
<use href="#sp" x="452" y="741" width="14" height="14"/><use href="#sp" x="452" y="760" width="14" height="14"/><use href="#sp" x="452" y="835" width="14" height="14"/><use href="#sp" x="452" y="873" width="14" height="14"/>
<text class="n" x="479" y="748.500" style="letter-spacing:0">None</text><text class="n" x="479" y="767" style="letter-spacing:0">None</text><text class="n" x="479" y="842.500" style="letter-spacing:0">None</text><text class="n" x="479" y="881" style="letter-spacing:0">None</text>
<use href="#chev" x="557" y="746" width="9" height="6"/><use href="#chev" x="557" y="765" width="9" height="6"/><use href="#chev" x="557" y="840" width="9" height="6"/><use href="#chev" x="557" y="878" width="9" height="6"/>
<text x="120" y="899" style="letter-spacing:.1px">Contents</text>
<text x="397" y="899">Add:</text>
<circle cx="434" cy="898.500" r="6.500" fill="#d0d0d0"/><path d="M432 895L437 898.500L432 902Z" fill="#2a2a2a"/>
<text x="139" y="918" style="letter-spacing:0">Rectangle 1</text>
<text class="n" x="307" y="918" style="letter-spacing:0">Normal</text>
<use href="#chev" x="426" y="916" width="9" height="6"/>
<path d="M3 757.500H593M3 776.500H593M3 795.500H593M3 814.500H593M3 832.500H593M3 851.500H593M3 870.500H593M3 889.500H593M3 908.500H593" stroke="#1f1f1f"/>
<!-- footer left -->
<rect x="3" y="927" width="1590" height="17" fill="#212121"/>
<rect x="7" y="927" width="18" height="17" fill="#161616"/>
<path d="M9 931H18V941H9ZM12 934H21V943H12Z" fill="none" stroke="#3d8ee0" stroke-width="1.500"/>
<rect x="30" y="930" width="9" height="9" fill="none" stroke="#b8b8b8" stroke-width="1.400"/><circle cx="38" cy="937" r="4.500" fill="none" stroke="#b8b8b8" stroke-width="1.400"/>
<path d="M52 929V943H50V930ZM58 929V943H60V930M50 936L54 933V939ZM60 936L56 933V939" fill="#b8b8b8" stroke="#b8b8b8" stroke-width=".7"/>
<rect x="297" y="928" width="146" height="15" fill="#2d2d2d"/>
<text x="302" y="936" style="font-size:11.500px;fill:#a8a8a8;letter-spacing:.3px">Toggle Switches / Modes</text>

<!-- timeline right -->
<rect x="596" y="676" width="984" height="58" fill="#262626"/>
<rect x="600" y="684" width="979" height="10" fill="#666"/>
<rect x="596" y="684" width="6" height="10" rx="3" fill="#3d8ee0"/><rect x="1575" y="684" width="6" height="10" rx="3" fill="#3d8ee0"/>
<rect x="862" y="684" width="3" height="10" fill="#6fa3d8"/>
<g>
<text class="t" x="606" y="703">0:00f</text>
<text class="t" x="670.500" y="703">04:05f</text><text class="t" x="737.500" y="703">08:10f</text><text class="t" x="804.500" y="703">12:15f</text><text class="t" x="872" y="703">16:20f</text><text class="t" x="939" y="703">20:25f</text><text class="t" x="1007" y="703">25:00f</text><text class="t" x="1074" y="703">29:05f</text><text class="t" x="1141.500" y="703">33:10f</text><text class="t" x="1208.500" y="703">37:15f</text><text class="t" x="1276" y="703">41:20f</text><text class="t" x="1344" y="703">45:25f</text><text class="t" x="1411" y="703">50:00f</text><text class="t" x="1478.500" y="703">54:05f</text><text class="t" x="1545.500" y="703">58:10f</text>
</g>
<path d="M603 711V716M670.500 711V716M737.500 711V716M804.500 711V716M872 711V716M939 711V716M1007 708V716M1074 711V716M1141.500 711V716M1208.500 711V716M1276 711V716M1344 711V716M1411 708V716M1478.500 711V716M1545.500 711V716" stroke="#8c8c8c"/>
<rect x="596" y="716" width="985" height="1" fill="#101010"/>
<rect x="600" y="717" width="979" height="16" fill="#616161"/>
<rect x="596" y="717" width="7" height="17" rx="3" fill="#3d8ee0"/><rect x="1574" y="717" width="7" height="17" rx="3" fill="#3d8ee0"/>
<rect x="602" y="733" width="969" height="5" fill="#4db33b"/>
<path d="M1141 735.500H1290" stroke="#1c1c1c" stroke-width="5" stroke-dasharray="1 3 2 2 1 4 3 5 2 2 1 3 4 5 2 3 6 2 3 2 1 4 2 3 5 4 2 5 4 6 3 8 2 3"/>
<rect x="602" y="738" width="969" height="190" fill="#323232"/>
<rect x="596" y="738" width="6" height="190" fill="#262626"/>
<rect x="602" y="739" width="969" height="18" fill="#70707f"/>
<rect x="602" y="758" width="969" height="18" fill="#6d6556"/>
<path d="M603 759H607L603 763ZM1570 759H1566L1570 763Z" fill="#3a352c"/>
<rect x="602" y="833" width="969" height="18" fill="#3b3b3b"/>
<rect x="1103" y="833" width="145" height="18" fill="#75847f"/>
<path d="M1104 834H1108L1104 838ZM1247 834H1243L1247 838Z" fill="#3a423f"/>
<rect x="602" y="871" width="969" height="18" fill="#515a86"/>
<path d="M602 757.500H1571M602 776.500H1571M602 795.500H1571M602 814.500H1571M602 832.500H1571M602 851.500H1571M602 870.500H1571M602 889.500H1571M602 908.500H1571" stroke="#1d1d1d"/>
<g>
<use href="#hg" x="892" y="780" width="10" height="12"/><use href="#hg" x="909" y="780" width="10" height="12"/>
<use href="#hg" x="892" y="799" width="10" height="12"/><use href="#hg" x="909" y="799" width="10" height="12"/>
<use href="#hg" x="892" y="818" width="10" height="12"/><use href="#hg" x="909" y="818" width="10" height="12"/><use href="#hg" x="942" y="818" width="10" height="12"/><use href="#hg" x="1028" y="818" width="10" height="12"/><use href="#hg" x="1063" y="818" width="10" height="12"/><use href="#hg" x="1090" y="818" width="10" height="12"/><use href="#hg" x="1135" y="818" width="10" height="12"/><use href="#hg" x="1259" y="818" width="10" height="12"/><use href="#hg" x="1287" y="818" width="10" height="12"/>
</g>
<path d="M1104 856L1109 861.500L1104 867L1099 861.500ZM1140 856L1145 861.500L1140 867L1135 861.500Z" fill="#b0b0b0"/>
<!-- playhead -->
<path d="M864 696V928" stroke="#3d8ee0"/>
<path d="M857 699H871V708L864 715L857 708Z" fill="#3d8ee0"/>
<path d="M861 893H867M864 893V905M861 905H867M861 912H867M864 912V924M861 924H867" stroke="#8fb0d8" stroke-width="1.500"/>
<!-- right side widgets -->
<path d="M1583 718H1595V728L1589 735L1583 728Z" fill="#c8c8c8"/>
<path d="M1588 742L1583 754M1588 747H1595V754H1588Z" fill="#d0d0d0" stroke="#262626"/><circle cx="1587" cy="755" r="3" fill="none" stroke="#c8c8c8"/>
<rect x="1581" y="759" width="15" height="109" rx="7" fill="#3a3a3a"/>
<!-- zoom mini -->
<rect x="596" y="928" width="126" height="16" fill="#262626"/>
<path d="M601 939L606 933L611 939Z" fill="#c9c9c9"/>
<path d="M628 936.500H677" stroke="#444" stroke-width="2"/>
<circle cx="629" cy="937" r="4" fill="#262626" stroke="#b9b9b9" stroke-width="1.500"/>
<path d="M690 939L697 931L699 933L701 931L708 939Z" fill="#c9c9c9"/>

<!-- dock -->
<path d="M343 1000V952Q343 946 349 946H1251Q1257 946 1257 952V1000Z" fill="#685c58"/>
<!-- finder -->
<rect x="351" y="955" width="35" height="33" rx="3" fill="#58b5ee"/>
<path d="M369 955H383Q386 955 386 958V985Q386 988 383 988H367Q365 975 369 955Z" fill="#dbe6f1"/>
<path d="M360 962V968M376 962V968" stroke="#1a2b44" stroke-width="2"/><path d="M356 976Q368 985 381 976" fill="none" stroke="#1a2b44" stroke-width="1.500"/>
<!-- news -->
<circle cx="411" cy="973" r="18" fill="#f5f5f5"/><circle cx="411" cy="973" r="16.500" fill="#ea4f5e"/><path d="M402 965L414 984H420V981L408 962H402ZM418 962H420V975L414 966V962Z" fill="#fff"/>
<!-- music -->
<circle cx="455" cy="973" r="18" fill="#f3f3f5"/><circle cx="455" cy="973" r="15.500" fill="#f6f0f5" stroke="#ef6a8a"/><path d="M451 982V966L462 963V979" fill="none" stroke="#c750c2" stroke-width="2"/><circle cx="448" cy="982" r="3" fill="#8a7bea"/><circle cx="459" cy="979" r="3" fill="#e85c9f"/>
<!-- calendar -->
<path d="M481 961L513 955L516 987L484 992Z" fill="#2f2f2f"/><path d="M481 960L512 955L515 985L484 988Z" fill="#f4f4f4"/><path d="M481 960L512 955L513 965L482 968Z" fill="#d9493e"/>
<text x="497" y="962" transform="rotate(-8 497 962)" style="font-size:7px;fill:#fff;text-anchor:middle;letter-spacing:0">OCT</text>
<text x="498" y="976" transform="rotate(-7 498 976)" style="font-size:18px;fill:#222;text-anchor:middle;letter-spacing:-.5px">23</text>
<!-- notes -->
<path d="M525 957L552 953L558 986L531 990Z" fill="#f6f1c9"/><path d="M525 957L552 953L553 959L526 963Z" fill="#f2d458"/>
<!-- reminders -->
<path d="M570 957L597 953L602 985L575 989Z" fill="#f5f5f5" stroke="#222" stroke-width=".8"/><circle cx="577" cy="962" r="2" fill="#f19a35"/><circle cx="578" cy="971" r="2" fill="#4fc864"/><circle cx="579" cy="980" r="2" fill="#b06cd8"/>
<!-- photos -->
<circle cx="628" cy="973" r="18" fill="#f0f0f0"/>
<g><path d="M628 973L628 960A13 13 0 0 1 637 964Z" fill="#f2c230"/><path d="M628 973L637 964A13 13 0 0 1 641 973Z" fill="#8dc63f"/><path d="M628 973L641 973A13 13 0 0 1 637 982Z" fill="#4cb69a"/><path d="M628 973L637 982A13 13 0 0 1 628 986Z" fill="#3f9fd8"/><path d="M628 973L628 986A13 13 0 0 1 619 982Z" fill="#6a64c8"/><path d="M628 973L619 982A13 13 0 0 1 615 973Z" fill="#b45cbe"/><path d="M628 973L615 973A13 13 0 0 1 619 964Z" fill="#e1506c"/><path d="M628 973L619 964A13 13 0 0 1 628 960Z" fill="#ef7c3a"/></g>
<!-- messages -->
<path d="M671 955C661 955 653 962 653 971C653 977 656 981 660 984L657 990Q663 990 667 987Q669 988 671 988C681 988 689 980 689 971C689 962 681 955 671 955Z" fill="#4ba2f0"/>
<ellipse cx="679" cy="979" rx="11" ry="9" fill="#f5f5f5"/><circle cx="674" cy="979" r="1.500" fill="#2778d8"/><circle cx="679" cy="979" r="1.500" fill="#2778d8"/><circle cx="684" cy="979" r="1.500" fill="#2778d8"/>
<!-- books -->
<circle cx="715" cy="972" r="18.500" fill="#e7791f" stroke="#f3f3f3"/><path d="M703 964Q711 963 715 967Q719 963 727 964V981Q719 980 715 983Q711 980 703 981Z" fill="#fbeadb"/><path d="M715 967V983" stroke="#c56a2b"/>
<!-- facetime -->
<rect x="739" y="955" width="33" height="33" rx="8" fill="#62d26e"/><rect x="745" y="965" width="14" height="12" rx="2" fill="#fff" opacity=".9"/><circle cx="768" cy="979" r="11" fill="#f5f5f5"/><path d="M763 974Q765 984 773 985L775 982L771 979L769 981Q766 979 766 977L768 975L765 972Z" fill="#35b94c"/>
<circle cx="772" cy="957" r="8" fill="#e2382e"/><text x="772" y="957" style="font-size:9px;fill:#fff;text-anchor:middle;font-weight:bold;letter-spacing:0">24</text>
<!-- app store -->
<circle cx="802" cy="972.500" r="18" fill="#1f82ee" stroke="#f3f3f3"/><path d="M794 981L805 962M810 981L799 962M789 976H815" stroke="#fff" stroke-width="2.300"/>
<!-- prefs -->
<rect x="826" y="954" width="37" height="37" rx="6" fill="#9a9a9a"/><circle cx="844" cy="972" r="14" fill="#4a4a4a"/><circle cx="844" cy="972" r="9" fill="#a9a9a9"/><path d="M844 958V986M830 972H858M834 962L854 982M854 962L834 982" stroke="#3a3a3a" stroke-width="2.500"/><circle cx="844" cy="972" r="4" fill="#3a3a3a"/>
<circle cx="859" cy="957" r="8" fill="#e2382e"/><text x="859" y="957" style="font-size:9px;fill:#fff;text-anchor:middle;font-weight:bold;letter-spacing:0">1</text>
<!-- chrome -->
<circle cx="888" cy="973" r="19" fill="#dd4b3e"/>
<path d="M888 973L871.500 963.500A19 19 0 0 0 879 990Z" fill="#3fa757"/>
<path d="M888 973L906.500 968A19 19 0 0 1 879 990Z" fill="#f3c63c"/>
<circle cx="888" cy="973" r="9.500" fill="#f3f3f3"/><circle cx="888" cy="973" r="7.500" fill="#4a8cf0"/>
<path d="M920 961V985" stroke="#2b2523"/>
<!-- encoder -->
<rect x="932" y="952" width="38" height="38" fill="#6c55c6"/><rect x="934" y="954" width="34" height="34" fill="#0d0c32"/><path d="M940 959L962 982H940Z" fill="#9b9be8"/>
<!-- quicktime -->
<circle cx="995" cy="971" r="16.500" fill="#34404a" stroke="#7f8a92" stroke-width="2"/><circle cx="995" cy="971" r="9" fill="#0f4b78"/><path d="M1000 979L1012 991H1005L995 981Z" fill="#5d6870"/>
<!-- ae -->
<rect x="1019" y="952" width="39" height="38" fill="#ad94e8"/><rect x="1021" y="954" width="35" height="34" fill="#14103a"/>
<text x="1038" y="971" style="font-size:22px;fill:#ad94e8;text-anchor:middle;letter-spacing:0">Ae</text>
<path d="M1070 957V992" stroke="#2b2523"/>
<!-- stacks -->
<path d="M1093 951H1106L1112 957V965H1093Z" fill="#e8e8e8"/><rect x="1084" y="965" width="35" height="24" fill="#1d1d1d"/><rect x="1084" y="970" width="35" height="15" fill="#7d7470"/><rect x="1100" y="970" width="14" height="14" fill="#3f3a38"/>
<rect x="1126" y="958" width="38" height="26" fill="#ececec"/><rect x="1130" y="962" width="13" height="18" fill="#c9c9c9"/><rect x="1147" y="962" width="14" height="4" fill="#bbb"/><circle cx="1158" cy="983" r="7" fill="#6a6a6a"/><circle cx="1158" cy="983" r="3" fill="#2a2a2a"/>
<rect x="1169" y="960" width="38" height="25" fill="#ececec"/><rect x="1169" y="960" width="38" height="5" fill="#c97a3a"/><rect x="1172" y="968" width="24" height="2" fill="#999"/><rect x="1172" y="973" width="18" height="2" fill="#aaa"/>
<circle cx="1198" cy="983" r="7" fill="#dd4b3e"/><path d="M1198 983L1192 979A7 7 0 0 0 1195 990Z" fill="#3fa757"/><path d="M1198 983L1205 982A7 7 0 0 1 1195 990Z" fill="#f3c63c"/><circle cx="1198" cy="983" r="3" fill="#4a8cf0"/>
<path d="M1218 960H1246L1243 985Q1232 991 1221 985Z" fill="#d8d8d8"/><ellipse cx="1232" cy="958" rx="14.500" ry="5" fill="#8e8e8e"/><path d="M1222 956L1228 952L1232 956L1238 951L1242 957" fill="#eee"/>
<circle cx="367" cy="995.500" r="1.500" fill="#111"/><circle cx="454" cy="995.500" r="1.500" fill="#111"/><circle cx="627" cy="995.500" r="1.500" fill="#111"/><circle cx="844" cy="995.500" r="1.500" fill="#111"/><circle cx="887" cy="995.500" r="1.500" fill="#111"/><circle cx="1037" cy="995.500" r="1.500" fill="#111"/>
</svg>
</body></html>
